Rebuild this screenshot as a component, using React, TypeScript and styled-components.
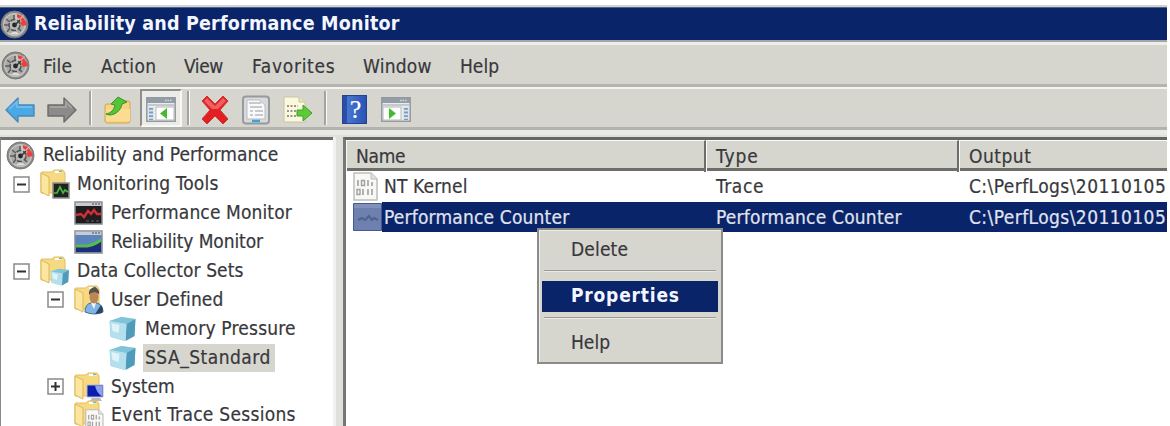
import React from 'react';
import styled, { createGlobalStyle, css } from 'styled-components';

const face = '#d6d6cf';
const navy = '#0a246a';

const GlobalStyle = createGlobalStyle`
  body { margin: 0; background: #fff; }
  * { box-sizing: border-box; }
`;

const Window = styled.div`
  width: 1167px;
  height: 426px;
  padding-top: 5px;
  display: flex;
  flex-direction: column;
  overflow: hidden;
  font: 19px/28px 'DejaVu Sans Condensed', 'DejaVu Sans', sans-serif;
  color: #38383c;
  -webkit-text-stroke: 0.2px;
  white-space: nowrap;
`;

const Label = styled.span<{ $track?: number }>`
  letter-spacing: ${({ $track = 0 }) => $track}px;
`;

const TitleBar = styled.header`
  height: 37px;
  flex: none;
  display: flex;
  align-items: center;
  gap: 5px;
  padding-top: 1px;
  border-top: 2px solid #d2d2d0;
  border-bottom: 2px solid #a2a5aa;
  background: ${navy};
  box-shadow: inset 0 1px #50618c;
  color: #f4f6ff;
  font-size: 19.5px;
  font-weight: bold;
  -webkit-text-stroke: 0;
`;

const MenuBar = styled.nav`
  height: 45px;
  flex: none;
  display: flex;
  align-items: center;
  background: ${face};
  border-top: 3px solid #ededeb;
  border-bottom: 3px solid #b5b5b0;
  padding: 2px 0 0 1px;
`;

const MenuEntry = styled.span<{ $width: number }>`
  flex: none;
  width: ${({ $width }) => $width}px;
`;

const MenuIcon = styled.span`
  display: flex;
  width: 42px;
`;

const ToolBar = styled.div`
  height: 43px;
  flex: none;
  display: flex;
  align-items: center;
  background: ${face};
  border-top: 2px solid #f3f3f1;
  border-bottom: 3px solid #b2b2ae;
  padding-left: 5px;
`;

const ToolButton = styled.span<{ $width?: number; $pressed?: boolean }>`
  flex: none;
  width: ${({ $width = 42 }) => $width}px;
  height: 38px;
  padding-top: 3px;
  display: flex;
  align-items: center;
  ${({ $pressed }) =>
    $pressed &&
    css`
      justify-content: center;
      background: #ebebe8;
      border: 2px solid #f8f8f7;
      border-top-color: #8f8f8c;
      border-left-color: #8f8f8c;
    `}
`;

const Divider = styled.span<{ $gap?: number }>`
  flex: none;
  width: 3px;
  height: 34px;
  background: #a3a3a0;
  border-right: 1px solid #fafafa;
  margin-right: ${({ $gap = 12 }) => $gap}px;
`;

const Panes = styled.main`
  flex: 1;
  min-height: 0;
  display: flex;
  gap: 10px;
  padding-top: 7px;
  background: linear-gradient(#e9e9e6, #e9e9e6 5px, #dfdfdc 5px);
`;

const Tree = styled.section`
  width: 333px;
  flex: none;
  overflow: hidden;
  background: #fff;
  border-top: 3px solid #70706e;
  border-left: 1px solid #8a8a88;
  box-shadow: 3px 0 #f1f1ef;
  padding-top: 1px;
`;

const TreeRow = styled.div<{ $level: number }>`
  height: 28.9px;
  display: flex;
  align-items: center;
  padding-left: ${({ $level }) => [5, 12, 46, 107][$level]}px;
`;

const Expander = styled.span`
  width: 17px;
  height: 17px;
  margin-right: 10px;
  flex: none;
  display: grid;
  place-items: center;
`;

const TreeIcon = styled.span`
  width: 30px;
  flex: none;
  display: flex;
  margin-right: 5px;
`;

const TreeText = styled.span<{ $selected?: boolean }>`
  height: 28px;
  line-height: 27px;
  padding: 0 4px 0 2px;
  background: ${({ $selected }) => ($selected ? face : 'transparent')};
`;

const ListPane = styled.section`
  position: relative;
  flex: 1;
  min-width: 0;
  background: #fff;
  border-top: 3px solid #666664;
  border-left: 3px solid #777775;
`;

const columns = css`
  display: grid;
  grid-template-columns: 360px 253px 1fr;
`;

const ListHeader = styled.div`
  ${columns}
  height: 31px;
  background: ${face};
  border-bottom: 3px solid #6d6d6a;
`;

const HeaderCell = styled.span`
  border-top: 1px solid #fafafa;
  border-left: 1px solid #fafafa;
  border-right: 2px solid #6d6d6a;
  padding-left: 9px;
  line-height: 31px;
  &:last-child { border-right: 0; }
`;

const ListRow = styled.div<{ $selected?: boolean }>`
  ${columns}
  height: 30.5px;
  line-height: 30px;
  ${({ $selected }) =>
    $selected &&
    css`
      color: #e0e4ef;
      background: linear-gradient(${navy}, ${navy}) 36px 0 no-repeat;
    `}
`;

const Cell = styled.span`
  display: flex;
  align-items: center;
  padding-left: 10px;
  overflow: hidden;
`;

const NameCell = styled(Cell)`
  padding-left: 7px;
`;

const RowIcon = styled.span`
  width: 31px;
  display: flex;
  flex: none;
`;

const ContextMenu = styled.div`
  position: absolute;
  left: 191px;
  top: 88px;
  width: 186px;
  height: 136px;
  padding: 4px 3px;
  background: ${face};
  border: 2px solid #8b8b89;
  box-shadow: inset 1px 1px #eeeeec;
`;

const ContextItem = styled.div<{ $active?: boolean }>`
  height: 31px;
  line-height: 31px;
  padding-left: 29px;
  ${({ $active }) =>
    $active &&
    css`
      background: ${navy};
      color: #f4f6ff;
      font-weight: bold;
      line-height: 29px;
      -webkit-text-stroke: 0;
    `}
`;

const ContextLine = styled.div`
  height: 2px;
  margin: 5px 2px 9px;
  background: #9b9b98;
  border-bottom: 1px solid #e8e8e5;
  &:nth-of-type(4) { margin: 5px 2px 8px; }
`;

const Gauge = () => (
  <svg width="29" height="29" viewBox="0 0 29 29">
    <circle cx="14.5" cy="14.5" r="13.5" fill="#8b8b89" stroke="#777776" />
    <circle cx="14.5" cy="14.5" r="10.800" fill="#a9a9a7" stroke="#c3c3c1" strokeWidth="1.400" />
    <path d="M15 4a10.500 10.500 0 0 1 9.500 9l-5.500.5-5-5z" fill="#c6c6c4" />
    <path d="M17 4l5 2 4 6 1 3-5 1-2-4 2-1-5-4z" fill="#ee3f3d" />
    <path d="M19.500 9.500l4-4" stroke="#d9b4b2" strokeWidth="1.300" />
    <path d="M6 9l4 3M4 15h5M7 22l3-4M21 21l-3-3M14 5v4" stroke="#5c5c5b" strokeWidth="1.500" />
    <circle cx="14.500" cy="15" r="5.500" fill="#b9b9b7" stroke="#505050" strokeWidth="1.500" strokeDasharray="5 2" />
    <circle cx="14.500" cy="15" r="2.400" fill="#262626" />
    <path d="M15 15l5-5" stroke="#333" strokeWidth="1.500" />
    <path d="M10 24q5-5 9 0" fill="#dededc" />
  </svg>
);

const Arrow = ({ forward = false }: { forward?: boolean }) => (
  <svg width="30" height="26" viewBox="0 0 30 26">
    <path
      d={forward ? 'M29 13L17 1v7H1v11h16v6z' : 'M1 13L13 1v7h16v11H13v6z'}
      fill={forward ? '#8b8b89' : '#4aa8e4'}
      stroke={forward ? '#6b6b6a' : '#4689b9'}
      strokeWidth="1.400"
      strokeLinejoin="round"
    />
    <path d={forward ? 'M3 10h16V5l6 6' : 'M4 12l8-7v5h15'} fill="none" stroke={forward ? '#a3a3a1' : '#6cbdf0'} strokeWidth="1.800" />
  </svg>
);

const UpFolder = () => (
  <svg width="28" height="28" viewBox="0 0 28 28">
    <path d="M1 10q0-2 2-2h8l2-3h11q2 0 2 2v18q0 2-2 2H3q-2 0-2-2z" fill="#f6d481" stroke="#cfa650" />
    <path d="M2 13h24v12H2z" fill="#fbdc90" />
    <path d="M2 18C7 17 10 14 11 9L7 8l7-7 9 5-5 2c-1 6-6 11-13 11z" fill="#55c436" stroke="#36942a" />
  </svg>
);

const Pane = ({ right = false }: { right?: boolean }) => (
  <svg width="30" height="25" viewBox="0 0 30 25">
    <path d="M.8.8h28.400v23.400H.8z" fill="#ececeb" stroke="#92999f" strokeWidth="1.500" />
    <path d="M1 1h28v5H1z" fill="#929da8" />
    <path d="M19 3.500h7" stroke="#d5dbe0" strokeWidth="1.500" strokeDasharray="1.500 1" />
    <path d="M2 8h26" stroke="#b8bec3" strokeWidth="1.500" />
    <path d={right ? 'M2 10h18v13H2z' : 'M10 10h18v13H10z'} fill="#fff" stroke="#b4b9bd" />
    <path d={right ? 'M22 10h6v13h-6z' : 'M2 10h6v13H2z'} fill="#d8e6f2" />
    <path d={right ? 'M25 11v12' : 'M5 11v12'} stroke="#7f9dbb" strokeWidth="4" strokeDasharray="1.800 1.800" />
    <path d={right ? 'M8 11l7 5.500-7 5.500z' : 'M21 11l-7 5.500 7 5.500z'} fill="#43bc2b" />
  </svg>
);

const Cross = () => (
  <svg width="30" height="30" viewBox="0 0 30 30">
    <path d="M2 6l5-5 8 8 8-8 5 5-8 9 8 9-5 5-8-8-8 8-5-5 8-9z" fill="#e31f22" stroke="#c5383a" strokeLinejoin="round" />
    <path d="M4 6l3-3 8 8 8-8 3 3-8 8h-6z" fill="#f0605e" />
  </svg>
);

const PropertiesSheet = () => (
  <svg width="28" height="30" viewBox="0 0 28 30">
    <rect x="1" y="1.500" width="26" height="27" rx="3" fill="#d8d9da" stroke="#989a9d" strokeWidth="2" />
    <path d="M5 5h12l6 5v14H5z" fill="#fafafa" stroke="#b8bcc0" />
    <path d="M7 8h12M8 12h12M8 16h3m2 0h8M8 20h3m2 0h8" stroke="#b5b9bf" strokeWidth="1.500" />
    <path d="M10 26h8" stroke="#35a5da" strokeWidth="2.500" />
  </svg>
);

const ExportSheet = () => (
  <svg width="30" height="28" viewBox="0 0 30 28">
    <path d="M1 1h15l6 5v20H1z" fill="#fbf8de" stroke="#c7c4a5" />
    <path d="M16 1v5h6" fill="#e7e3c2" stroke="#c7c4a5" />
    <path d="M4 10h11M4 15h9M4 20h10" stroke="#77776f" strokeWidth="1.700" strokeDasharray="2 1.500" />
    <path d="M14 14h6V9l9 8-9 8v-5h-6z" fill="#5dcb38" stroke="#3da12c" />
  </svg>
);

const HelpTile = styled.span`
  width: 25px;
  height: 29px;
  background: linear-gradient(90deg, #2c4da6 4px, #4777d1 4px, #2b53b4);
  border: 1px solid #27418f;
  color: #fff;
  font: 26px/27px 'Liberation Serif', serif;
  text-align: center;
  padding-left: 2px;
`;

const PlusMinus = ({ plus = false }: { plus?: boolean }) => (
  <svg width="17" height="17" viewBox="0 0 17 17">
    <path d="M1 1h15v15H1z" fill="#fff" stroke="#8b8b8b" strokeWidth="1.500" />
    <path d={plus ? 'M4 8.500h9M8.500 4v9' : 'M4 8.500h9'} stroke="#303030" strokeWidth="2" />
  </svg>
);

const Folder = ({ children }: { children?: React.ReactNode }) => (
  <svg width="30" height="30" viewBox="0 0 30 30">
    <path d="M1 4q0-1 1-1h10l2-2h9l2 3v20H1z" fill="#f7d982" stroke="#e2bd63" />
    <path d="M15 3h7" stroke="#fff" strokeWidth="2" />
    <path d="M19 2.500h3" stroke="#78b79a" strokeWidth="1.500" />
    <path d="M1 4l8 4v19l-8-4z" fill="#fbe6a0" stroke="#ddb65a" />
    {children}
  </svg>
);

const CubeShape = () => (
  <>
    <path d="M1 5l12-4 14 2-1 17-10 5-14-4z" fill="#9fd4e6" />
    <path d="M1 5l12-4 14 2-9 5z" fill="#7fc4d9" />
    <path d="M18 8l9-5-1 17-9 5z" fill="#4f9bba" />
    <path d="M1 5l17 3-1 17-14-4z" fill="#b4e0ee" />
    <path d="M3 7l8 2-1 8-6-2z" fill="#dff3f9" />
  </>
);

const Cube = () => (
  <svg width="29" height="26" viewBox="0 0 28 26">
    <CubeShape />
  </svg>
);

const GraphBadge = () => (
  <>
    <path d="M13 14h16v15H13z" fill="#20241f" stroke="#8f908e" strokeWidth="1.500" />
    <path d="M14 24h3l3-6 3 6 2-3 3 2" fill="none" stroke="#48b541" strokeWidth="1.700" />
  </>
);

const CubeBadge = () => (
  <g transform="translate(10 12) scale(.7)">
    <CubeShape />
  </g>
);

const UserBadge = () => (
  <>
    <path d="M11 27q0-8 6-9h6q6 2 6 9-8 4-18 0z" fill="#81b4e3" stroke="#456a96" />
    <path d="M27 20q3 4 1 8l-7 1z" fill="#2d4467" />
    <path d="M17 18h5l-2 6z" fill="#f2f6fa" />
    <ellipse cx="20" cy="12" rx="4.500" ry="6.500" fill="#b98758" />
    <path d="M15 10q-1-7 6-8 5 3 4 7l-4-2-4 1z" fill="#55524b" />
  </>
);

const ScreenBadge = () => (
  <>
    <path d="M13 13h16v12H13z" fill="#0b1fae" stroke="#b6bac5" />
    <path d="M21 13.500h7.500v11q-6-3-7.500-11z" fill="#8aa0f0" />
    <path d="M18 26h8l2 3H16z" fill="#bababa" />
  </>
);

const SheetShape = () => (
  <>
    <path d="M1 1h17l6 6v21H1z" fill="#f8f8f7" stroke="#bdbdbb" strokeWidth="1.500" />
    <path d="M18 1v6h6" fill="#e2e2e0" stroke="#bdbdbb" />
    <path d="M5 8v6M15 8v6M19 10v4M10 17v6M15 17v6M19 17v6" stroke="#a0a09e" strokeWidth="1.600" />
    <path d="M8.500 8.500h3v5h-3zM4 17.500h3v5H4z" fill="none" stroke="#a0a09e" strokeWidth="1.400" />
  </>
);

const SheetBadge = () => (
  <g transform="translate(11 9) scale(.75)">
    <SheetShape />
  </g>
);

const GraphWindow = ({ reliability = false }: { reliability?: boolean }) => (
  <svg width="29" height="24" viewBox="0 0 29 24">
    <path d="M1 1h27v22H1z" fill={reliability ? '#5c83bd' : '#211c1f'} stroke="#888d93" strokeWidth="1.500" />
    <path d="M1.500 1.500h26v3.500h-26z" fill="#c8cbd0" />
    <path d="M18 3h8" stroke="#70767e" strokeWidth="1.500" strokeDasharray="2 1" />
    {reliability ? (
      <>
        <path d="M2 16h11l14-6v12H2z" fill="#1f2c7d" />
        <path d="M2 16h11q7-1 14-6" fill="none" stroke="#4fc043" strokeWidth="3" />
      </>
    ) : (
      <>
        <path d="M2 14l5-1 3 3 4-6 3 3 3-4 3 4h4" fill="none" stroke="#cf2f35" strokeWidth="2.400" />
        <path d="M12 20h14" stroke="#6d6769" strokeDasharray="3 2" />
      </>
    )}
  </svg>
);

const Sheet = () => (
  <svg width="25" height="29" viewBox="0 0 25 29">
    <SheetShape />
  </svg>
);

const CounterIcon = () => (
  <svg width="29" height="28" viewBox="0 0 29 28">
    <path d="M.5.5h28v27H.5z" fill="#6d80b0" stroke="#47588d" />
    <path d="M1 1h27v4H1z" fill="#8291bb" />
    <path d="M5 17l4-2 3 2 4-4 3 4 2-2 4 2" fill="none" stroke="#4a6684" strokeWidth="2" />
  </svg>
);

type Node = { level: number; text: string; track: number; icon: React.ReactNode; toggle?: 'plus' | 'minus' | 'none'; selected?: boolean };

const nodes: Node[] = [
  { level: 0, text: 'Reliability and Performance', track: 0.02, icon: <Gauge /> },
  { level: 1, text: 'Monitoring Tools', track: 0.18, icon: <Folder><GraphBadge /></Folder>, toggle: 'minus' },
  { level: 2, text: 'Performance Monitor', track: 0.12, icon: <GraphWindow />, toggle: 'none' },
  { level: 2, text: 'Reliability Monitor', track: -0.1, icon: <GraphWindow reliability />, toggle: 'none' },
  { level: 1, text: 'Data Collector Sets', track: 0.1, icon: <Folder><CubeBadge /></Folder>, toggle: 'minus' },
  { level: 2, text: 'User Defined', track: 0.12, icon: <Folder><UserBadge /></Folder>, toggle: 'minus' },
  { level: 3, text: 'Memory Pressure', track: 0.2, icon: <Cube /> },
  { level: 3, text: 'SSA_Standard', track: 0.48, icon: <Cube />, selected: true },
  { level: 2, text: 'System', track: 0, icon: <Folder><ScreenBadge /></Folder>, toggle: 'plus' },
  { level: 2, text: 'Event Trace Sessions', track: 0.29, icon: <Folder><SheetBadge /></Folder>, toggle: 'none' },
];

const menus = [
  { text: 'File', width: 58, track: 0.2 },
  { text: 'Action', width: 83, track: 0.3 },
  { text: 'View', width: 68, track: -0.4 },
  { text: 'Favorites', width: 111, track: 0.7 },
  { text: 'Window', width: 97, track: 0.2 },
  { text: 'Help', width: 60, track: 0 },
];

export default function App() {
  return (
    <>
      <GlobalStyle />
      <Window>
        <TitleBar>
          <Gauge />
          <Label $track={0.2}>Reliability and Performance Monitor</Label>
        </TitleBar>
        <MenuBar>
          <MenuIcon><Gauge /></MenuIcon>
          {menus.map((m) => (
            <MenuEntry key={m.text} $width={m.width}>
              <Label $track={m.track}>{m.text}</Label>
            </MenuEntry>
          ))}
        </MenuBar>
        <ToolBar>
          <ToolButton><Arrow /></ToolButton>
          <ToolButton><Arrow forward /></ToolButton>
          <Divider />
          <ToolButton $width={36}><UpFolder /></ToolButton>
          <ToolButton $width={42} $pressed><Pane /></ToolButton>
          <ToolButton $width={5} />
          <Divider $gap={10} />
          <ToolButton $width={42}><Cross /></ToolButton>
          <ToolButton $width={41}><PropertiesSheet /></ToolButton>
          <ToolButton $width={41}><ExportSheet /></ToolButton>
          <Divider $gap={15} />
          <ToolButton $width={39}><HelpTile>?</HelpTile></ToolButton>
          <ToolButton><Pane right /></ToolButton>
        </ToolBar>
        <Panes>
          <Tree>
            {nodes.map((n) => (
              <TreeRow key={n.text} $level={n.level}>
                {n.toggle && <Expander>{n.toggle !== 'none' && <PlusMinus plus={n.toggle === 'plus'} />}</Expander>}
                <TreeIcon>{n.icon}</TreeIcon>
                <TreeText $selected={n.selected}>
                  <Label $track={n.track}>{n.text}</Label>
                </TreeText>
              </TreeRow>
            ))}
          </Tree>
          <ListPane>
            <ListHeader>
              <HeaderCell><Label $track={-0.3}>Name</Label></HeaderCell>
              <HeaderCell><Label $track={0.9}>Type</Label></HeaderCell>
              <HeaderCell><Label $track={0.5}>Output</Label></HeaderCell>
            </ListHeader>
            <ListRow>
              <NameCell><RowIcon><Sheet /></RowIcon><Label $track={0.15}>NT Kernel</Label></NameCell>
              <Cell><Label $track={0.6}>Trace</Label></Cell>
              <Cell><Label $track={0.42}>C:\PerfLogs\20110105</Label></Cell>
            </ListRow>
            <ListRow $selected>
              <NameCell><RowIcon><CounterIcon /></RowIcon><Label $track={0.18}>Performance Counter</Label></NameCell>
              <Cell><Label $track={0.2}>Performance Counter</Label></Cell>
              <Cell><Label $track={0.42}>C:\PerfLogs\20110105</Label></Cell>
            </ListRow>
            <ContextMenu>
              <ContextItem><Label $track={0.15}>Delete</Label></ContextItem>
              <ContextLine />
              <ContextItem $active><Label $track={0.8}>Properties</Label></ContextItem>
              <ContextLine />
              <ContextItem>Help</ContextItem>
            </ContextMenu>
          </ListPane>
        </Panes>
      </Window>
    </>
  );
}
